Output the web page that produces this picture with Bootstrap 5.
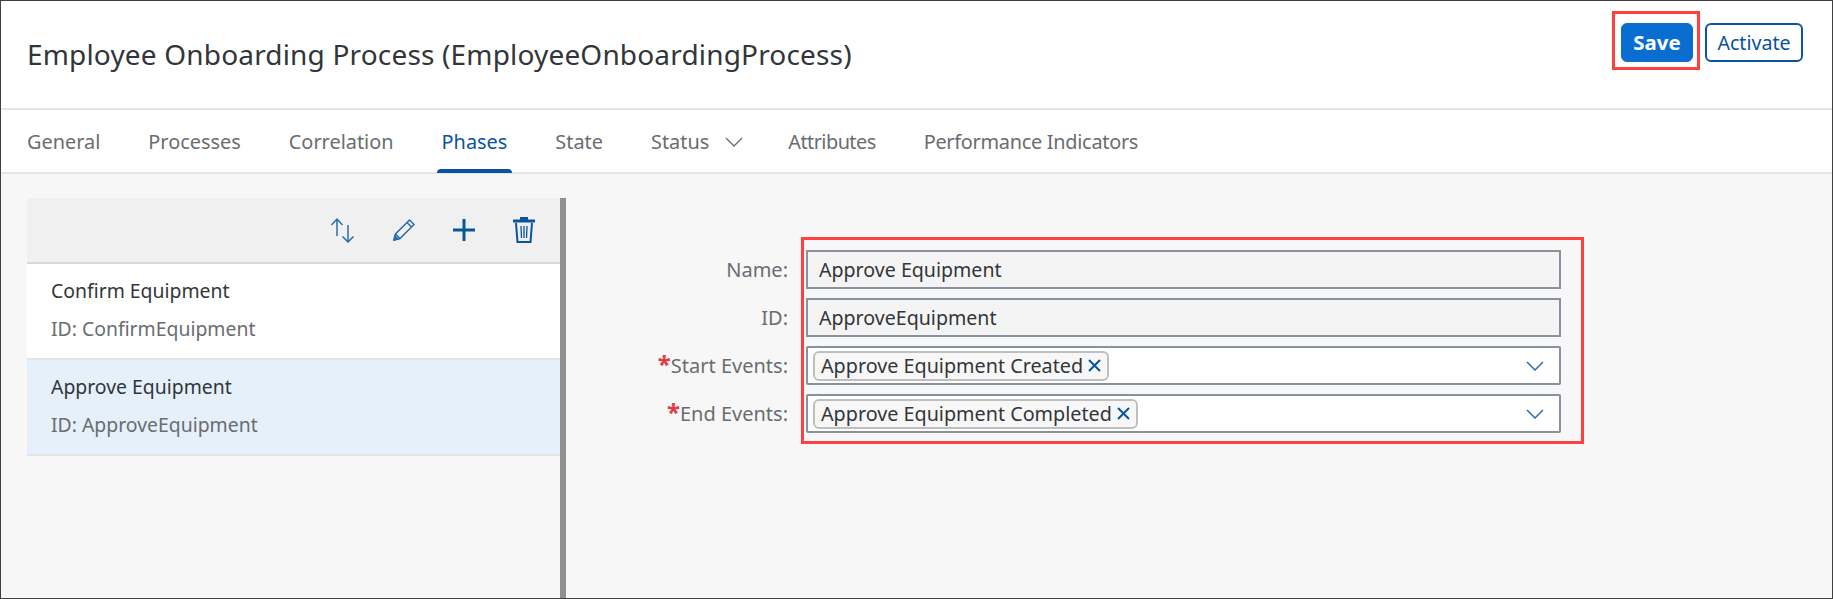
<!DOCTYPE html>
<html lang="en">
<head>
<meta charset="utf-8">
<title>Employee Onboarding Process</title>
<link rel="stylesheet" href="https://cdn.jsdelivr.net/npm/bootstrap@5.3.0/dist/css/bootstrap.min.css">
<style>
html,body{height:599px;margin:0;overflow:hidden;}
body{font-family:"Noto Sans","Liberation Sans",sans-serif;font-size:19.6px;color:#32363a;background:#fff;}
.app-frame{height:599px;border:1px solid #3f3f3f;overflow:hidden;}
.app-head{height:109px;border-bottom:2px solid #e5e5e5;padding:0 29px 0 26px;flex:none;}
.app-title{font-size:28px;font-weight:400;margin:0;color:#32363a;letter-spacing:.17px;}
.annot{border:3px solid #ff4040;}
.annot-save{padding:9px 6px 4px 6px;margin:10px 5px 0 0;height:59px;width:88px;}
.btn-save,.btn-activate{height:39px;border-radius:6px;padding:0;font-size:19.6px;line-height:1;}
.btn-save{width:72px;background:#0a6ed1;border:1px solid #0a6ed1;color:#fff;font-weight:700;font-size:20.4px;}
.btn-activate{width:98px;background:#fff;border:2px solid #0a55a4;color:#0854a0;margin-top:22px;}
.tab-strip{height:64px;border-bottom:2px solid #e5e5e5;padding-left:21px;flex:none;flex-wrap:nowrap;}
.tab-strip .nav-link{color:#6a6d70;font-size:19.9px;padding:2px 5px 0;margin-right:38px;height:62px;display:flex;align-items:center;position:relative;}
.tab-strip .tab-on{color:#0854a0;}
.tab-strip .tab-drop{margin-right:35px;}
.tab-strip .tab-tight{letter-spacing:-.55px;}
.tab-strip .tab-snug{letter-spacing:-.28px;}
.tab-on::after{content:"";position:absolute;left:0;right:0;bottom:-1px;height:4px;background:#0854a0;border-radius:4px 4px 0 0;}
.stage{background:#f7f7f7;min-height:0;}
.side-pane{width:539px;margin:24px 0 0 26px;border-right:6px solid #909090;flex:none;}
.side-bar{height:66px;background:#f0f0f0;border-bottom:2px solid #d9d9d9;gap:36px;padding-right:24px;}
.side-bar svg{display:block;}
.phase-list{border-radius:0;}
.phase-item{height:96px;padding:0 24px;border:0;border-bottom:2px solid #e4e4e4;background:#fff;font-size:19.4px;color:#32363a;border-radius:0;}
.phase-item.is-picked{background:#e5f0fa;}
.phase-name{line-height:28px;margin-top:13px;}
.phase-id{line-height:28px;margin-top:10px;color:#6a6d70;}
.form-wrap{margin:63px 0 0 0;}
.label-col{width:222px;padding-top:13px;flex:none;margin-right:13px;font-size:20px;}
.label-col label{display:block;height:39px;line-height:39px;margin-bottom:9px;text-align:right;color:#6a6d70;white-space:nowrap;}
.req{color:#e03c3c;font-weight:700;font-size:24px;line-height:1;}
.annot-form{width:783px;padding:10px 20px 8px 2px;height:207px;flex:none;}
.field-box{height:39px;border:2px solid #89919c;border-radius:0;margin-bottom:9px;font-size:19.6px;color:#32363a;padding:0 11px;background:#f4f4f4;box-shadow:none;}
.field-box:last-child{margin-bottom:0;}
.field-box[readonly]{background:#f4f4f4;}
.combo{background:#fff;border-radius:2px;padding:0 0 0 5px;}
.chip{height:30px;border:2px solid #bfbfbf;border-radius:6px;background:#f7f7f7;padding:0 6px;white-space:nowrap;gap:5px;color:#32363a;font-size:19.75px;}
.chip-x{flex:none;}
.combo-caret{margin-left:auto;margin-right:15px;flex:none;}
</style>
</head>
<body>
<div class="app-frame d-flex flex-column">
  <header class="app-head d-flex justify-content-between">
    <h1 class="app-title align-self-center">Employee Onboarding Process (EmployeeOnboardingProcess)</h1>
    <div class="d-flex align-items-start">
      <div class="annot annot-save"><button type="button" class="btn btn-save d-block">Save</button></div>
      <button type="button" class="btn btn-activate">Activate</button>
    </div>
  </header>
  <nav class="nav tab-strip">
    <a class="nav-link" href="#">General</a>
    <a class="nav-link" href="#">Processes</a>
    <a class="nav-link" href="#">Correlation</a>
    <a class="nav-link tab-on" href="#">Phases</a>
    <a class="nav-link" href="#">State</a>
    <a class="nav-link tab-drop" href="#">Status
      <svg class="ms-3" width="18" height="10" viewBox="0 0 18 10" fill="none" stroke="#6a6d70" stroke-width="1.3"><path d="M1 1l8 8 8-8"/></svg></a>
    <a class="nav-link tab-tight" href="#">Attributes</a>
    <a class="nav-link tab-snug" href="#">Performance Indicators</a>
  </nav>
  <main class="stage flex-grow-1 d-flex">
    <section class="side-pane d-flex flex-column">
      <div class="side-bar d-flex align-items-center justify-content-end">
        <svg width="26" height="26" viewBox="0 0 26 26" fill="none" stroke="#2a6cb0" stroke-width="1.5"><path d="M7 19V2M1.5 8 7 2l5.5 6M18 8v17M12.500 19.500 18 25l5.500-5.500"/></svg>
        <svg width="24" height="24" viewBox="0 0 24 24" fill="none" stroke="#2a6cb0" stroke-width="1.500"><path d="M2 22l1.500-6L17.500 2l4.500 4.500L8 20.500zM3.500 16 8 20.500M15 4.500 19.500 9"/><path d="M2 22l1-4 3 3z" fill="#2a6cb0"/></svg>
        <svg width="24" height="24" viewBox="0 0 24 24" fill="none" stroke="#0854a0" stroke-width="3"><path d="M12 1v22M1 12h22"/></svg>
        <svg width="24" height="28" viewBox="0 0 24 28" fill="none" stroke="#0854a0" stroke-width="2"><path d="M1 5h22" stroke-width="3"/><path d="M8 2.500h8" stroke-width="3"/><path d="M4 7l1.500 19h13L20 7"/><path d="M9 10l.5 12M12 10v12M15 10l-.5 12" stroke-width="1.300"/></svg>
      </div>
      <div class="list-group phase-list">
        <a href="#" class="list-group-item phase-item">
          <div class="phase-name">Confirm Equipment</div>
          <div class="phase-id">ID: ConfirmEquipment</div>
        </a>
        <a href="#" class="list-group-item phase-item is-picked">
          <div class="phase-name">Approve Equipment</div>
          <div class="phase-id">ID: ApproveEquipment</div>
        </a>
      </div>
    </section>
    <form class="form-wrap d-flex align-items-start">
      <div class="label-col">
        <label for="fName">Name:</label>
        <label for="fId">ID:</label>
        <label><span class="req">*</span>Start Events:</label>
        <label><span class="req">*</span>End Events:</label>
      </div>
      <div class="annot annot-form">
        <input id="fName" class="form-control field-box" readonly value="Approve Equipment">
        <input id="fId" class="form-control field-box" readonly value="ApproveEquipment">
        <div class="field-box combo d-flex align-items-center">
          <span class="chip d-inline-flex align-items-center">Approve Equipment Created
            <svg class="chip-x" width="13" height="13" viewBox="0 0 13 13" fill="none" stroke="#0854a0" stroke-width="2"><path d="M1 1l11 11M12 1 1 12"/></svg></span>
          <svg class="combo-caret" width="18" height="10" viewBox="0 0 18 10" fill="none" stroke="#2a6cb0" stroke-width="1.500"><path d="M1 1l8 8 8-8"/></svg>
        </div>
        <div class="field-box combo d-flex align-items-center">
          <span class="chip d-inline-flex align-items-center">Approve Equipment Completed
            <svg class="chip-x" width="13" height="13" viewBox="0 0 13 13" fill="none" stroke="#0854a0" stroke-width="2"><path d="M1 1l11 11M12 1 1 12"/></svg></span>
          <svg class="combo-caret" width="18" height="10" viewBox="0 0 18 10" fill="none" stroke="#2a6cb0" stroke-width="1.500"><path d="M1 1l8 8 8-8"/></svg>
        </div>
      </div>
    </form>
  </main>
</div>
<script src="https://cdn.jsdelivr.net/npm/bootstrap@5.3.0/dist/js/bootstrap.bundle.min.js"></script>
</body>
</html>
